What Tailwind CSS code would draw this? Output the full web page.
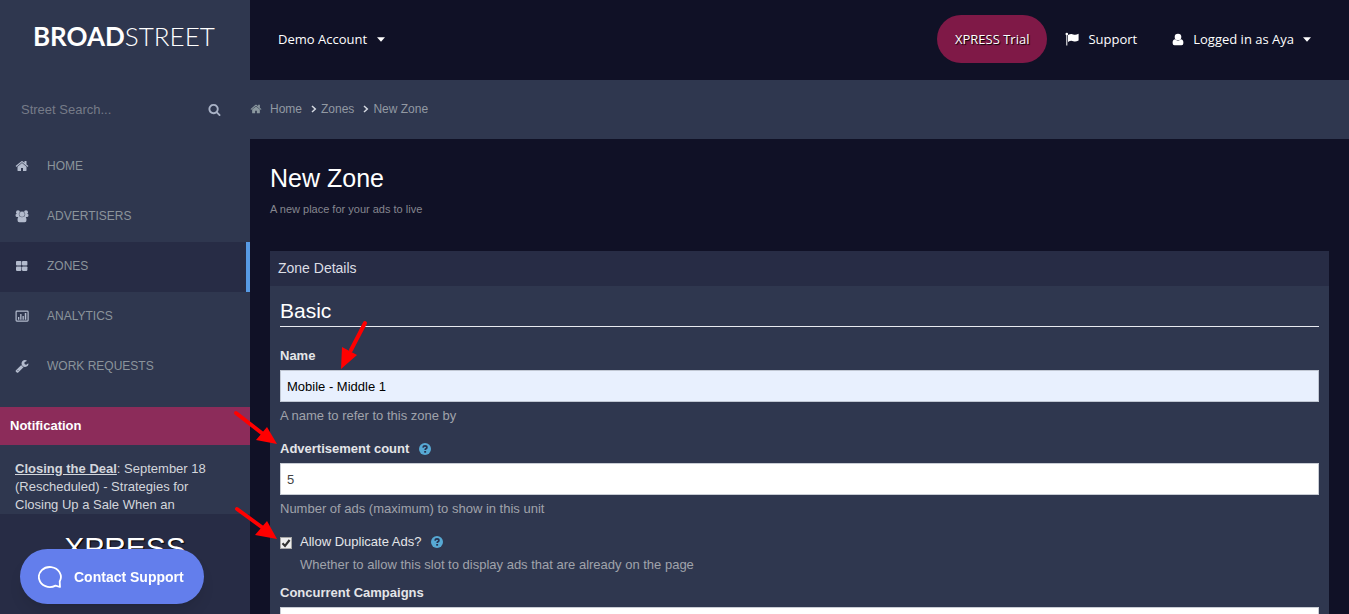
<!DOCTYPE html>
<html lang="en">
<head>
    <meta charset="UTF-8">
    <meta name="viewport" content="width=device-width, initial-scale=1.0">
    <title>New Zone - Broadstreet</title>
    <script src="https://cdn.jsdelivr.net/npm/@tailwindcss/browser@4"></script>
</head>
<body class="bg-[#101126] font-['Liberation_Sans',Arial,sans-serif] text-[13px] leading-[18px]">
    <!-- icons used more than once -->
    <svg class="hidden">
        <symbol id="icon-home" viewBox="0 0 1792 1792">
            <path d="M1472 992v480q0 26-19 45t-45 19h-384v-384h-256v384h-384q-26 0-45-19t-19-45v-480q0-1 .5-3t.5-3l575-474 575 474q1 2 1 6zm223-69l-62 74q-8 9-21 11h-3q-13 0-21-7l-692-577-692 577q-12 8-24 7-13-2-21-11l-62-74q-8-10-7-23.500t11-21.500l719-599q32-26 76-26t76 26l244 204v-195q0-14 9-23t23-9h192q14 0 23 9t9 23v408l219 182q10 8 11 21.500t-7 23.500z"/>
        </symbol>
        <symbol id="icon-help" viewBox="0 0 12 12">
            <circle cx="6" cy="6" r="6" fill="#57a9d4"/>
            <path d="M4 4.600Q4.200 2.900 6 2.900Q7.900 2.900 7.900 4.400Q7.900 5.300 6.900 5.800Q6.200 6.200 6.200 7.100" fill="none" stroke="#283250" stroke-width="1.700"/>
            <rect x="5.200" y="8" width="1.900" height="1.700" fill="#283250"/>
        </symbol>
        <symbol id="icon-chevron" viewBox="0 0 6 8">
            <path d="M1 1l3.300 3L1 7" fill="none" stroke="#d5d9e2" stroke-width="1.500"/>
        </symbol>
    </svg>

    <div class="flex h-screen overflow-hidden">
        <!-- sidebar -->
        <aside class="flex w-[250px] shrink-0 flex-col bg-[#2f374f]">
            <a href="#" class="flex h-20 shrink-0 items-center pb-2 pl-[33px] font-[Lato,sans-serif] text-[26px] leading-[30px] text-white"><span class="font-bold">BROAD</span><span class="font-light">STREET</span></a>

            <form class="flex h-[62px] shrink-0 items-center pr-[29px] pb-[3px] pl-[21px]">
                <input type="text" aria-label="Street Search" placeholder="Street Search..." class="min-w-0 flex-1 bg-transparent placeholder:text-[#767b88] focus:outline-none">
                <button type="button" aria-label="Search" class="text-[#a9b2c6]">
                    <svg class="h-[13px] w-[13px]" viewBox="0 0 1792 1792" fill="currentColor"><path d="M1216 832q0-185-131.500-316.500t-316.500-131.500-316.500 131.500-131.500 316.500 131.500 316.500 316.500 131.500 316.500-131.500 131.500-316.500zm512 832q0 52-38 90t-90 38q-54 0-90-38l-343-342q-179 124-399 124-143 0-273.500-55.500t-225-150-150-225-55.500-273.500 55.500-273.500 150-225 225-150 273.500-55.500 273.500 55.500 225 150 150 225 55.500 273.500q0 220-124 399l343 343q37 37 37 90z"/></svg>
                </button>
            </form>

            <nav class="shrink-0 text-xs text-[#8b949b]">
                <a href="#" class="flex h-[50px] items-center gap-[18px] pb-[2px] pl-[15px]">
                    <svg class="h-[14px] w-[14px] text-[#b3bbcd]" fill="currentColor"><use href="#icon-home"/></svg>
                    HOME
                </a>
                <a href="#" class="flex h-[50px] items-center gap-[18px] pb-[2px] pl-[15px]">
                    <svg class="h-[14px] w-[14px] text-[#b3bbcd]" viewBox="0 0 14 14" fill="currentColor">
                        <circle cx="3" cy="3.200" r="2"/>
                        <circle cx="11" cy="3.200" r="2"/>
                        <path d="M.5 6.200Q.5 5 1.500 5h3v3H1.700Q.5 8 .5 6.200zM13.500 6.200Q13.500 5 12.500 5h-3v3h2.800Q13.500 8 13.500 6.200z"/>
                        <circle cx="7" cy="5.200" r="2.900" stroke="#2f374f" stroke-width=".4"/>
                        <path d="M2.500 11Q2.500 7.600 4.800 7.600Q7 9 9.200 7.600Q11.500 7.600 11.500 11Q11.500 13.200 9.700 13.200H4.300Q2.500 13.200 2.500 11z"/>
                    </svg>
                    ADVERTISERS
                </a>
                <a href="#" class="flex h-[50px] items-center gap-[18px] border-r-4 border-[#579ae4] bg-[#272c45] pb-[2px] pl-[15px]">
                    <svg class="h-[14px] w-[14px] text-[#b3bbcd]" viewBox="0 0 14 14" fill="currentColor">
                        <rect x="1" y="2" width="5.400" height="4.500" rx=".8"/>
                        <rect x="7" y="2" width="5.400" height="4.500" rx=".8"/>
                        <rect x="1" y="7.400" width="5.400" height="4.500" rx=".8"/>
                        <rect x="7" y="7.400" width="5.400" height="4.500" rx=".8"/>
                    </svg>
                    ZONES
                </a>
                <a href="#" class="flex h-[50px] items-center gap-[18px] pb-[2px] pl-[15px]">
                    <svg class="h-[14px] w-[14px] text-[#b3bbcd]" viewBox="0 0 14 14" fill="currentColor">
                        <rect x="1.100" y="2.100" width="12" height="10" rx=".8" fill="none" stroke="currentColor" stroke-width="1.200"/>
                        <path d="M3 8h1.300v2.700H3zM5.200 5h1.300v5.700H5.200zM7.500 7h1.300v3.700H7.500zM9.800 4h1.500v6.700H9.800z"/>
                    </svg>
                    ANALYTICS
                </a>
                <a href="#" class="flex h-[50px] items-center gap-[18px] pb-[2px] pl-[15px]">
                    <svg class="h-[14px] w-[14px] text-[#b3bbcd]" viewBox="0 0 1792 1792" fill="currentColor"><path d="M448 1472q0-26-19-45t-45-19-45 19-19 45 19 45 45 19 45-19 19-45zm644-420l-682 682q-37 37-90 37-52 0-91-37l-106-108q-38-36-38-90 0-53 38-91l681-681q39 98 114.500 173.500t173.500 114.500zm634-435q0 39-23 106-47 134-164.500 217.500t-258.500 83.500q-185 0-316.500-131.500t-131.500-316.500 131.500-316.500 316.500-131.500q58 0 121.500 16.500t107.500 46.500q16 11 16 28t-16 28l-293 169v224l193 107q5-3 79-48.500t135.500-81 70.500-35.500q15 0 23.500 10t8.500 25z"/></svg>
                    WORK REQUESTS
                </a>
            </nav>

            <section class="mt-[15px] shrink-0">
                <h3 class="bg-[#8c2c5a] px-[10px] py-[10px] font-bold text-white">Notification</h3>
                <p class="h-[69px] overflow-hidden pt-[15px] pr-[30px] pl-[15px] text-[#d3d6dc]"><a href="#" class="font-bold underline">Closing the Deal</a>: September 18 (Rescheduled) - Strategies for Closing Up a Sale When an</p>
            </section>

            <div class="flex-1 bg-[#272c45] pt-4 text-center text-3xl text-white text-shadow-[1px_1px_1px_#000]">XPRESS</div>
        </aside>

        <div class="flex min-w-0 flex-1 flex-col">
            <header class="flex h-20 shrink-0 items-center justify-between pr-[38px] pb-[2px] pl-7 font-['Open_Sans',sans-serif] text-white">
                <button type="button" class="flex items-center gap-[10px]">
                    Demo Account
                    <svg class="h-[5px] w-[8px]" viewBox="0 0 9 5" fill="currentColor"><path d="M0 0h9L4.500 5z"/></svg>
                </button>
                <div class="flex items-center">
                    <a href="#" class="flex h-12 items-center rounded-full bg-[#7f1947] px-[18px] text-shadow-[1px_1px_1px_#000]">XPRESS Trial</a>
                    <a href="#" class="ml-[18px] flex items-center gap-2">
                        <svg class="h-[14px] w-[15px]" viewBox="0 0 15 14" fill="currentColor">
                            <circle cx="1.800" cy="2" r="1.300"/>
                            <path d="M1.300 2h1v11.500h-1zM3 3.100Q6 1.200 8.200 2.400Q10.500 3.500 13.600 1.700V8.500Q10.500 10.300 8.200 9.200Q6 8 3 9.900z"/>
                        </svg>
                        Support
                    </a>
                    <button type="button" class="ml-[35px] flex items-center gap-[9px]">
                        <svg class="h-[13px] w-[12px]" viewBox="0 0 12 13" fill="currentColor">
                            <circle cx="6" cy="4" r="3.300"/>
                            <path d="M.6 10Q.6 6.300 3.200 6.300Q6 9 8.800 6.300Q11.400 6.300 11.400 10Q11.400 12.300 9.500 12.300H2.500Q.6 12.300 .6 10z"/>
                        </svg>
                        Logged in as Aya
                        <svg class="h-[5px] w-[8px]" viewBox="0 0 9 5" fill="currentColor"><path d="M0 0h9L4.500 5z"/></svg>
                    </button>
                </div>
            </header>

            <nav aria-label="Breadcrumb" class="flex h-[59px] shrink-0 items-center bg-[#2f374f] pb-[2px] text-xs text-[#9299a3]">
                <a href="#" class="flex items-center gap-2">
                    <svg class="h-3 w-3 text-[#8b989f]" fill="currentColor"><use href="#icon-home"/></svg>
                    Home
                </a>
                <svg class="mr-1 ml-[9px] h-2 w-[6px]"><use href="#icon-chevron"/></svg>
                <a href="#">Zones</a>
                <svg class="mr-1 ml-[9px] h-2 w-[6px]"><use href="#icon-chevron"/></svg>
                <span>New Zone</span>
            </nav>

            <main class="flex flex-1 flex-col px-5 pt-6">
                <h1 class="text-[25px] leading-[30px] text-white">New Zone</h1>
                <p class="mt-2 text-[11px] leading-4 text-[#85868f]">A new place for your ads to live</p>

                <section class="mt-[34px] flex-1 bg-[#2f374f]">
                    <div class="flex h-[35px] items-center bg-[#272c45] px-2 pb-[2px] text-sm text-[#dcdee5]">Zone Details</div>
                    <form class="px-[10px] pt-3 text-[#e4e5e8]">
                        <h2 class="border-b border-[#e8eaf0] pb-[2px] text-[21px] leading-[26px] text-white">Basic</h2>

                        <label for="name" class="mt-5 block font-bold">Name</label>
                        <input type="text" id="name" value="Mobile - Middle 1" class="mt-[5px] block h-8 w-full border border-[#c0c7d3] bg-[#e8f0fe] px-[6px] text-black">
                        <p class="mt-[5px] text-[#a0a3ab]">A name to refer to this zone by</p>

                        <div class="mt-[15px] flex items-center gap-[10px]">
                            <label for="count" class="font-bold">Advertisement count</label>
                            <svg class="h-3 w-3"><use href="#icon-help"/></svg>
                        </div>
                        <input type="text" id="count" value="5" class="mt-[5px] block h-8 w-full border border-[#c8ccd4] bg-white px-[6px] text-[#444]">
                        <p class="mt-[5px] text-[#a0a3ab]">Number of ads (maximum) to show in this unit</p>

                        <div class="mt-[15px] flex items-center">
                            <span class="mt-[2px] mr-2 grid">
                                <input type="checkbox" id="duplicates" checked class="peer col-start-1 row-start-1 h-3 w-3 appearance-none border border-[#a5a5a5] bg-[#eeeeee]">
                                <svg class="pointer-events-none invisible col-start-1 row-start-1 h-3 w-3 peer-checked:visible" viewBox="0 0 12 12"><path d="M2.500 6.300l2.500 2.600L9.600 3" fill="none" stroke="#333" stroke-width="2.200"/></svg>
                            </span>
                            <label for="duplicates" class="mr-[10px]">Allow Duplicate Ads?</label>
                            <svg class="h-3 w-3"><use href="#icon-help"/></svg>
                        </div>
                        <p class="mt-[5px] pl-5 text-[#a0a3ab]">Whether to allow this slot to display ads that are already on the page</p>

                        <label for="campaigns" class="mt-[10px] block font-bold">Concurrent Campaigns</label>
                        <input type="text" id="campaigns" class="mt-[5px] block h-8 w-full border border-[#c8ccd4] bg-white px-[6px] text-[#444]">
                    </form>
                </section>
            </main>
        </div>
    </div>

    <!-- support widget -->
    <button type="button" class="fixed bottom-[10px] left-5 flex h-[55px] w-[184px] items-center gap-3 rounded-full bg-[#637eec] pl-[18px] text-sm font-bold text-white shadow-lg">
        <svg class="h-6 w-6" viewBox="0 0 24 24" fill="none" stroke="currentColor" stroke-width="1.800" stroke-linejoin="round"><path d="M17.500 20.600A11 10 0 1 1 21.700 16.500L22 22Z"/></svg>
        Contact Support
    </button>

    <!-- arrows pointing at the fields to fill in -->
    <svg class="pointer-events-none absolute top-0 left-0 h-[600px] w-[400px]" viewBox="0 0 400 600" fill="#ff0000" stroke="#ff0000" stroke-width="4" stroke-linecap="round">
        <path d="M365 323L351 350M236 413L263 434M237 509L263 528"/>
        <path stroke="none" d="M341 369L342 347L357 355ZM277 444L256 440L267 427ZM277 539L255 535L267 521Z"/>
    </svg>
</body>
</html>
